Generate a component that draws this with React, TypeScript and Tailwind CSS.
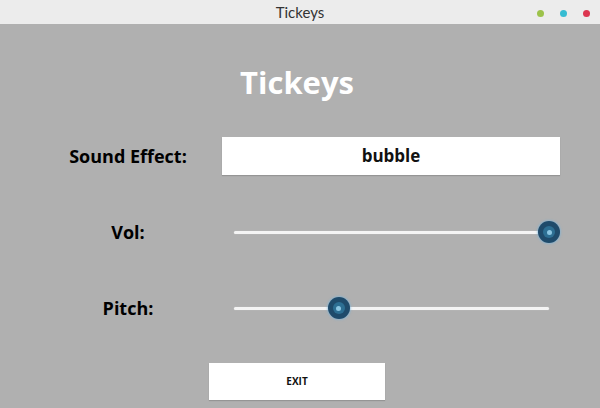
import React from 'react'

const font = { fontFamily: '"Open Sans", "Noto Sans", "DejaVu Sans", sans-serif' }

function Slider({ value }: { value: number }) {
  return (
    <div className="relative h-[38px] w-full">
      {/* track */}
      <div className="absolute left-[12px] right-[11px] top-[18px] h-[3px] rounded-full bg-[#f4f4f4] shadow-[0_0_1px_#d8d8d8]" />
      {/* knob */}
      <div
        className="absolute top-[8px] flex h-[22px] w-[22px] -translate-x-1/2 items-center justify-center rounded-full bg-[#1f4b6b] shadow-[0_0_2px_1px_rgba(120,180,220,0.6)]"
        style={{ left: `calc(12px + (100% - 23px) * ${value})` }}
      >
        <div className="flex h-[12px] w-[12px] items-center justify-center rounded-full bg-[#2d6f93]">
          <div className="h-[5px] w-[5px] rounded-full bg-[#8cc6e2]" />
        </div>
      </div>
    </div>
  )
}

export default function App() {
  return (
    <div className="flex h-[408px] w-[600px] flex-col overflow-hidden bg-[#b0b0b0]" style={font}>
      {/* Title bar */}
      <div className="relative flex h-6 shrink-0 items-center justify-center bg-[#ececec]">
        <span className="text-[15px] text-[#333]" style={{ fontFamily: 'Lato, "Open Sans", sans-serif' }}>
          Tickeys
        </span>
        <div className="absolute right-[10px] top-[10px] flex items-center gap-[16px]">
          <div className="h-[7px] w-[7px] rounded-full bg-[#9cc24a]" />
          <div className="h-[7px] w-[7px] rounded-full bg-[#36bcd2]" />
          <div className="h-[7px] w-[7px] rounded-full bg-[#dc3650]" />
        </div>
      </div>

      {/* Heading */}
      <h1 className="mt-[39px] flex h-[38px] items-center justify-center pr-[6px] text-[31px] font-bold text-white">
        Tickeys
      </h1>

      {/* Sound effect */}
      <div className="mt-[36px] flex h-[38px] items-center pl-[38px]">
        <div className="w-[180px] text-center text-[18px] font-bold text-black">Sound Effect:</div>
        <div className="ml-[4px] flex h-[38px] w-[338px] items-center justify-center bg-white text-[17px] font-bold text-[#111] shadow-[0_1px_1px_rgba(0,0,0,0.15)]">
          bubble
        </div>
      </div>

      {/* Vol */}
      <div className="mt-[38px] flex h-[38px] items-center pl-[38px]">
        <div className="w-[180px] text-center text-[18px] font-bold text-black">Vol:</div>
        <div className="ml-[4px] w-[338px]">
          <Slider value={1} />
        </div>
      </div>

      {/* Pitch */}
      <div className="mt-[38px] flex h-[38px] items-center pl-[38px]">
        <div className="w-[180px] text-center text-[18px] font-bold text-black">Pitch:</div>
        <div className="ml-[4px] w-[338px]">
          <Slider value={0.333} />
        </div>
      </div>

      {/* Exit */}
      <div className="mt-[36px] flex pl-[209px]">
        <button className="flex h-[37px] w-[176px] items-center justify-center bg-white text-[10px] font-bold text-[#111] shadow-[0_1px_1px_rgba(0,0,0,0.15)]">
          EXIT
        </button>
      </div>
    </div>
  )
}
